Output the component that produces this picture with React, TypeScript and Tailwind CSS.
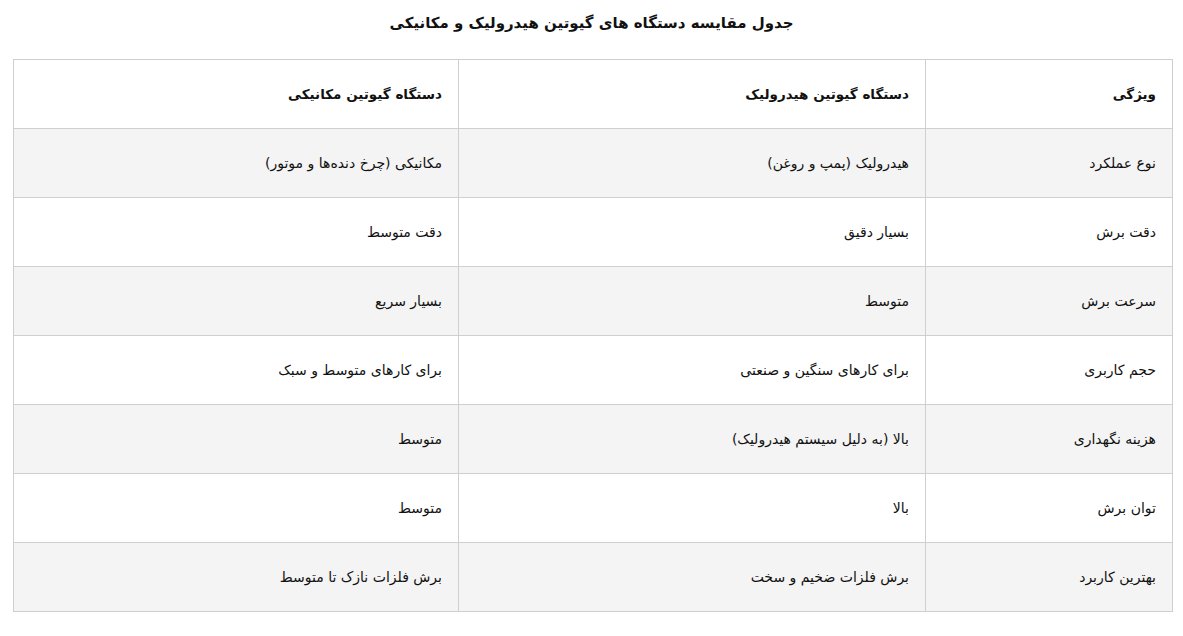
import React from "react";

const rows: [string, string, string][] = [
  ["نوع عملکرد", "هیدرولیک (پمپ و روغن)", "مکانیکی (چرخ دنده‌ها و موتور)"],
  ["دقت برش", "بسیار دقیق", "دقت متوسط"],
  ["سرعت برش", "متوسط", "بسیار سریع"],
  ["حجم کاربری", "برای کارهای سنگین و صنعتی", "برای کارهای متوسط و سبک"],
  ["هزینه نگهداری", "بالا (به دلیل سیستم هیدرولیک)", "متوسط"],
  ["توان برش", "بالا", "متوسط"],
  ["بهترین کاربرد", "برش فلزات ضخیم و سخت", "برش فلزات نازک تا متوسط"],
];

const App = () => {
  return (
    <div
      dir="rtl"
      className="bg-white text-[#111] px-[10px] pt-[8px] pb-[24px] font-['DejaVu_Sans',sans-serif]"
    >
      <h2 className="text-center text-[15px] font-bold h-[51px] leading-[30px]">
        جدول مقایسه دستگاه های گیوتین هیدرولیک و مکانیکی
      </h2>
      <table className="w-[1160px] mr-[0px] ml-auto border-collapse text-[14px]">
        <thead>
          <tr className="h-[69px]">
            <th className="w-[247px] border border-[#cfcfcf] text-right text-[13.5px] font-bold px-4">
              ویژگی
            </th>
            <th className="w-[467px] border border-[#cfcfcf] text-right text-[13.5px] font-bold px-4">
              دستگاه گیوتین هیدرولیک
            </th>
            <th className="border border-[#cfcfcf] text-right text-[13.5px] font-bold px-4">
              دستگاه گیوتین مکانیکی
            </th>
          </tr>
        </thead>
        <tbody>
          {rows.map((r, i) => (
            <tr
              key={i}
              className={i % 2 === 0 ? "h-[69px] bg-[#f4f4f4]" : "h-[69px] bg-white"}
            >
              {r.map((c, j) => (
                <td key={j} className="border border-[#cfcfcf] text-right px-4">
                  {c}
                </td>
              ))}
            </tr>
          ))}
        </tbody>
      </table>
    </div>
  );
};

export default App;
